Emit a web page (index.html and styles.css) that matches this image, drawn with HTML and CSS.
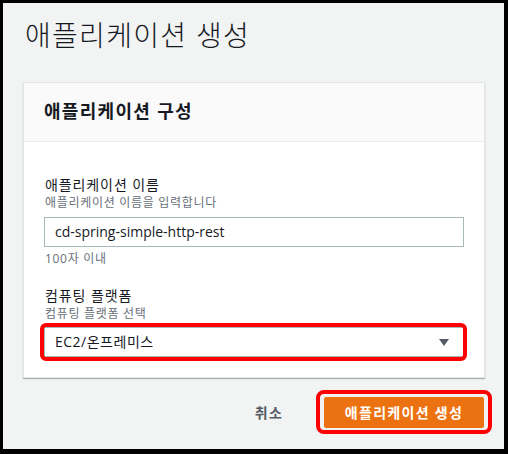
FILE: index.html
```html
<!DOCTYPE html>
<html lang="ko">
<head>
<meta charset="utf-8">
<link rel="stylesheet" href="styles.css">
</head>
<body>
<div class="frame">
  <h1 class="title">애플리케이션 생성</h1>
  <section class="card">
    <div class="card-header">애플리케이션 구성</div>
    <div class="card-body">
      <div class="field">
        <div class="label">애플리케이션 이름</div>
        <div class="desc">애플리케이션 이름을 입력합니다</div>
        <div class="input">cd-spring-simple-http-rest</div>
        <div class="hint">100자 이내</div>
      </div>
      <div class="field field-second">
        <div class="label">컴퓨팅 플랫폼</div>
        <div class="desc">컴퓨팅 플랫폼 선택</div>
        <div class="select highlight">
          <span class="select-value">EC2/온프레미스</span>
          <svg class="caret" width="10" height="7" viewBox="0 0 10 7"><path d="M0 0H10L5 7Z" fill="#545b64"/></svg>
        </div>
      </div>
    </div>
  </section>
  <div class="footer">
    <span class="cancel">취소</span>
    <span class="primary highlight-btn">애플리케이션 생성</span>
  </div>
</div>
</body>
</html>
```

FILE: styles.css
```css
* { box-sizing: border-box; }
html, body { margin: 0; padding: 0; }
body {
  width: 508px;
  height: 454px;
  background: #000;
  font-family: "Open Sans", "Noto Sans CJK KR", sans-serif;
  color: #16191f;
}
.frame {
  width: 508px;
  height: 454px;
  border-style: solid;
  border-color: #000;
  border-width: 3px 4px 5px 3px;
  background: #f2f3f3;
  display: flex;
  flex-direction: column;
}
.title {
  margin: 0;
  padding: 14px 0 0 22px;
  font-size: 28px;
  line-height: 36px;
  font-weight: 300;
  letter-spacing: 1.3px;
  color: #16191f;
}
.card {
  margin: 29px 19px 0 20px;
  background: #fff;
  border: 1px solid #e4e7e7;
  box-shadow: 0 1px 1px rgba(0, 28, 36, 0.3);
}
.card-header {
  background: #fafafa;
  border-bottom: 1px solid #eaeded;
  padding: 16px 20px 18px 20px;
  font-size: 18px;
  line-height: 24px;
  font-weight: 700;
  letter-spacing: 1.3px;
}
.card-body {
  padding: 33px 20px 20px 20px;
}
.field { display: flex; flex-direction: column; }
.field-second { margin-top: 19px; }
.label {
  font-size: 14px;
  line-height: 20px;
  padding-left: 1px;
  letter-spacing: 0.9px;
}
.desc, .hint {
  font-size: 12px;
  line-height: 16px;
  color: #687078;
  padding-left: 1px;
  letter-spacing: 0.7px;
}
.input {
  margin-top: 6px;
  height: 30px;
  border: 1px solid #aab7b8;
  padding: 0 10px;
  font-size: 14px;
  line-height: 28px;
}
.hint { margin-top: 4px; }
.select {
  position: relative;
  margin-top: 5px;
  height: 30px;
  border: 1px solid #aab7b8;
  padding: 0 14px 0 10px;
  font-size: 14px;
  line-height: 28px;
  display: flex;
  align-items: center;
  justify-content: space-between;
}
.select-value { letter-spacing: 0.5px; }
.highlight::after {
  content: "";
  position: absolute;
  inset: -5px -4px -5px -5px;
  border: 4px solid #ff0000;
  border-radius: 6px;
}
.caret { display: block; }
.footer {
  margin: 19px 20px 0 0;
  display: flex;
  justify-content: flex-end;
  align-items: center;
  gap: 41px;
}
.cancel {
  font-size: 14px;
  font-weight: 700;
  color: #545b64;
  line-height: 20px;
  letter-spacing: 1.2px;
}
.primary {
  position: relative;
  width: 160px;
  height: 31px;
  background: #ec7211;
  border: 1px solid #ec7211;
  border-radius: 2px;
  color: #fff;
  font-size: 14px;
  font-weight: 700;
  line-height: 29px;
  text-align: center;
  letter-spacing: 1.3px;
}
.highlight-btn::after {
  content: "";
  position: absolute;
  inset: -8px -9px -7px -9px;
  border: 4px solid #ff0000;
  border-radius: 8px;
}
```
